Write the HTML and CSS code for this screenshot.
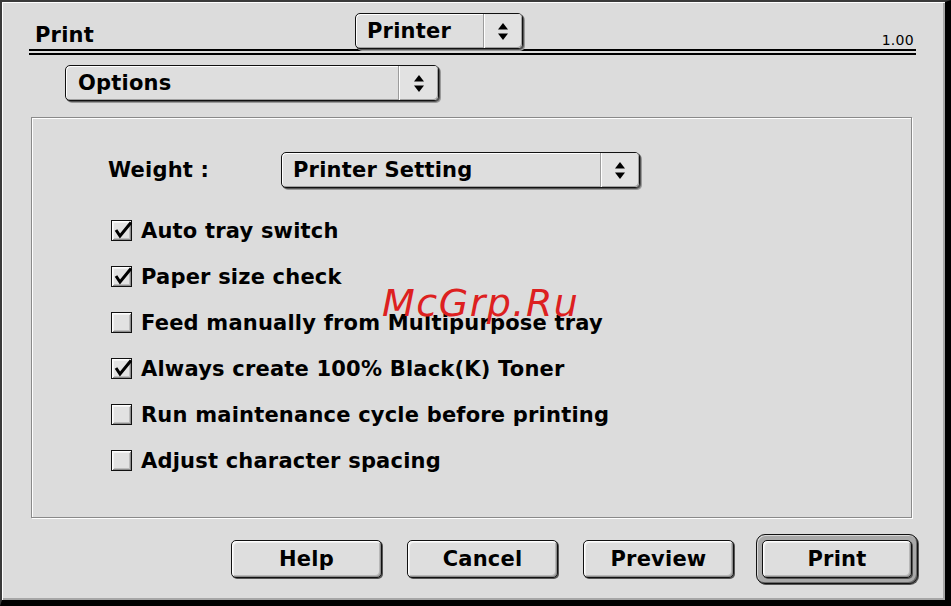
FILE: index.html
```html
<!DOCTYPE html>
<html>
<head>
<meta charset="utf-8">
<title>Print</title>
<link rel="stylesheet" href="styles.css">
</head>
<body>
<div class="window">
  <div class="header">
    <div class="title">Print</div>
    <div class="popup popup-printer">
      <span class="popup-label">Printer</span>
      <span class="popup-arrow"><svg width="10" height="17" viewBox="0 0 10 17"><polygon points="5,0 10,6.5 0,6.5"/><polygon points="0,10.5 10,10.5 5,17"/></svg></span>
    </div>
    <div class="version">1.00</div>
  </div>
  <div class="rule"></div>

  <div class="popup popup-options">
    <span class="popup-label">Options</span>
    <span class="popup-arrow"><svg width="10" height="17" viewBox="0 0 10 17"><polygon points="5,0 10,6.5 0,6.5"/><polygon points="0,10.5 10,10.5 5,17"/></svg></span>
  </div>

  <div class="panel">
    <div class="field">
      <span class="field-label">Weight :</span>
      <div class="popup popup-weight">
        <span class="popup-label">Printer Setting</span>
        <span class="popup-arrow"><svg width="10" height="17" viewBox="0 0 10 17"><polygon points="5,0 10,6.5 0,6.5"/><polygon points="0,10.5 10,10.5 5,17"/></svg></span>
      </div>
    </div>
    <div class="checks">
      <div class="check"><span class="box"><svg class="tick" width="24" height="20" viewBox="0 0 24 20"><polyline points="5,10 9,16 20,2.5"/></svg></span><span class="check-label">Auto tray switch</span></div>
      <div class="check"><span class="box"><svg class="tick" width="24" height="20" viewBox="0 0 24 20"><polyline points="5,10 9,16 20,2.5"/></svg></span><span class="check-label">Paper size check</span></div>
      <div class="check"><span class="box"></span><span class="check-label">Feed manually from Multipurpose tray</span></div>
      <div class="check"><span class="box"><svg class="tick" width="24" height="20" viewBox="0 0 24 20"><polyline points="5,10 9,16 20,2.5"/></svg></span><span class="check-label">Always create 100% Black(K) Toner</span></div>
      <div class="check"><span class="box"></span><span class="check-label">Run maintenance cycle before printing</span></div>
      <div class="check"><span class="box"></span><span class="check-label">Adjust character spacing</span></div>
    </div>
  </div>

  <div class="buttons">
    <div class="btn">Help</div>
    <div class="btn">Cancel</div>
    <div class="btn">Preview</div>
    <div class="default-ring"><div class="btn btn-default">Print</div></div>
  </div>

  <div class="watermark">McGrp.Ru</div>
</div>
</body>
</html>
```

FILE: styles.css
```css
html, body {
  margin: 0;
  padding: 0;
  background: #dcdcdc;
  overflow: hidden;
}

.window {
  position: relative;
  box-sizing: border-box;
  width: 951px;
  height: 606px;
  background: #dcdcdc;
  border-left: 2px solid #3a3a3a;
  border-top: 2px solid #3a3a3a;
  border-right: 6px solid #000;
  border-bottom: 6px solid #000;
  box-shadow: inset 1px 1px 0 #fff, inset -2px -2px 0 #a6a6a6;
  font-family: "DejaVu Sans", "Noto Sans", sans-serif;
  font-weight: bold;
  font-size: 21px;
  letter-spacing: 0.2px;
  color: #000;
}

.header {
  display: grid;
  grid-template-columns: 326px 168px 1fr;
  align-items: start;
  height: 36px;
  width: 887px;
  margin: 11px 0 0 27px;
}

.title {
  padding-left: 6px;
  margin-top: 10px;
  line-height: 24px;
}

.version {
  justify-self: end;
  margin-top: 19px;
  padding-right: 2px;
  font-size: 14px;
  font-weight: normal;
  letter-spacing: 0.3px;
  line-height: 16px;
}

.rule {
  width: 887px;
  height: 2px;
  margin-left: 27px;
  border-top: 2px solid #000;
  border-bottom: 2px solid #000;
}

.popup {
  display: flex;
  box-sizing: border-box;
  height: 36px;
  border: 1px solid #111;
  border-radius: 5px;
  background: #dedede;
  box-shadow: inset 1px 1px 0 #fff, inset -1px -1px 0 #a0a0a0, 1px 1px 0 #555, 2px 2px 0 #9a9a9a;
}

.popup-label {
  flex: 1;
  display: flex;
  align-items: center;
  padding-left: 11px;
  line-height: 24px;
  white-space: nowrap;
}

.popup-arrow {
  display: flex;
  align-items: center;
  justify-content: center;
  width: 38px;
  border-left: 1px solid #9c9c9c;
  box-shadow: inset 1px 0 0 #fff, inset -1px -1px 0 #a0a0a0;
  border-radius: 0 4px 4px 0;
  background: #e2e2e2;
}

.popup-arrow svg {
  fill: #000;
}

.popup-printer {
  width: 168px;
}

.popup-options {
  width: 374px;
  margin: 10px 0 0 63px;
}

.popup-options .popup-label {
  padding-left: 12px;
}

.popup-options .popup-arrow {
  width: 39px;
}

.popup-weight {
  width: 359px;
}

.panel {
  box-sizing: border-box;
  width: 881px;
  height: 401px;
  margin: 16px 0 0 29px;
  padding: 34px 0 0 76px;
  border: 1px solid #8a8a8a;
  box-shadow: inset 1px 1px 0 #fff, 1px 1px 0 #fff;
}

.field {
  display: flex;
  align-items: center;
}

.field-label {
  width: 173px;
  line-height: 24px;
}

.checks {
  display: flex;
  flex-direction: column;
  gap: 25px;
  margin-top: 32px;
  margin-left: 3px;
}

.check {
  display: flex;
  align-items: center;
  height: 21px;
  gap: 9px;
}

.check-label {
  line-height: 24px;
  white-space: nowrap;
}

.box {
  position: relative;
  box-sizing: border-box;
  width: 21px;
  height: 21px;
  flex: none;
  border: 1px solid #111;
  background: #e2e2e2;
  box-shadow: inset 1px 1px 0 #fff, inset -1px -1px 0 #8c8c8c, inset 2px 2px 0 #f2f2f2, inset -2px -2px 0 #bdbdbd;
}

.tick {
  position: absolute;
  left: -1px;
  top: -1px;
  fill: none;
  stroke: #000;
  stroke-width: 3;
  stroke-linejoin: miter;
}

.buttons {
  display: flex;
  align-items: center;
  gap: 25px;
  height: 50px;
  margin-top: 16px;
  padding-left: 229px;
}

.btn {
  box-sizing: border-box;
  width: 151px;
  height: 38px;
  display: flex;
  align-items: center;
  justify-content: center;
  border: 1px solid #111;
  border-radius: 5px;
  background: #dedede;
  box-shadow: inset 1px 1px 0 #fff, inset -1px -1px 0 #8c8c8c, inset 2px 2px 0 #efefef, inset -2px -2px 0 #b8b8b8, 1px 1px 0 #555;
  line-height: 24px;
}

.default-ring {
  margin-left: -3px;
  padding: 5px;
  border: 1px solid #111;
  border-radius: 9px;
  background: #a9a9a9;
  box-shadow: inset 1px 1px 0 #d8d8d8, inset -1px -1px 0 #6a6a6a, 1px 1px 0 #555;
}

.btn-default {
  width: 150px;
}

.watermark {
  position: absolute;
  left: 380px;
  top: 282px;
  font-family: "DejaVu Sans", sans-serif;
  font-style: italic;
  font-weight: normal;
  font-size: 38px;
  line-height: 38px;
  letter-spacing: 1.5px;
  color: #dd2020;
  white-space: nowrap;
}
```
